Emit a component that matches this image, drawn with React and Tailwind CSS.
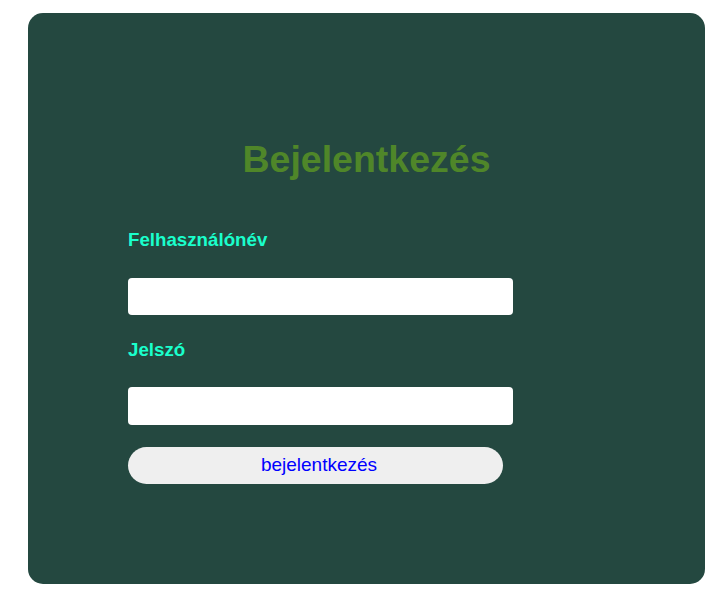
export default function App() {
  return (
    <div className="w-[728px] h-[598px] bg-white pt-[13px] pl-[28px]" style={{ fontFamily: '"Liberation Sans", Arial, sans-serif' }}>
      <div className="w-[677px] h-[571px] rounded-[15px] bg-[#244840] pt-[124px] pl-[100px] flex flex-col">
        <h2 className="-ml-[100px] h-[44px] leading-[44px] text-center text-[37.5px] font-bold text-[#4f8629]">Bejelentkezés</h2>
        <label className="mt-[48px] h-[22px] leading-[22px] text-[18.72px] font-bold text-[#1affcc]">Felhasználónév</label>
        <input type="text" className="mt-[27px] w-[385px] h-[37px] rounded-[4px] bg-white outline-none" />
        <label className="mt-[24px] h-[22px] leading-[22px] text-[18.72px] font-bold text-[#1affcc]">Jelszó</label>
        <input type="password" className="mt-[26px] w-[385px] h-[38px] rounded-[4px] bg-white outline-none" />
        <button className="mt-[22px] w-[375px] h-[37px] pl-[7px] rounded-full bg-[#efefef] text-[19px] text-[#0000ff]">bejelentkezés</button>
      </div>
    </div>
  );
}
